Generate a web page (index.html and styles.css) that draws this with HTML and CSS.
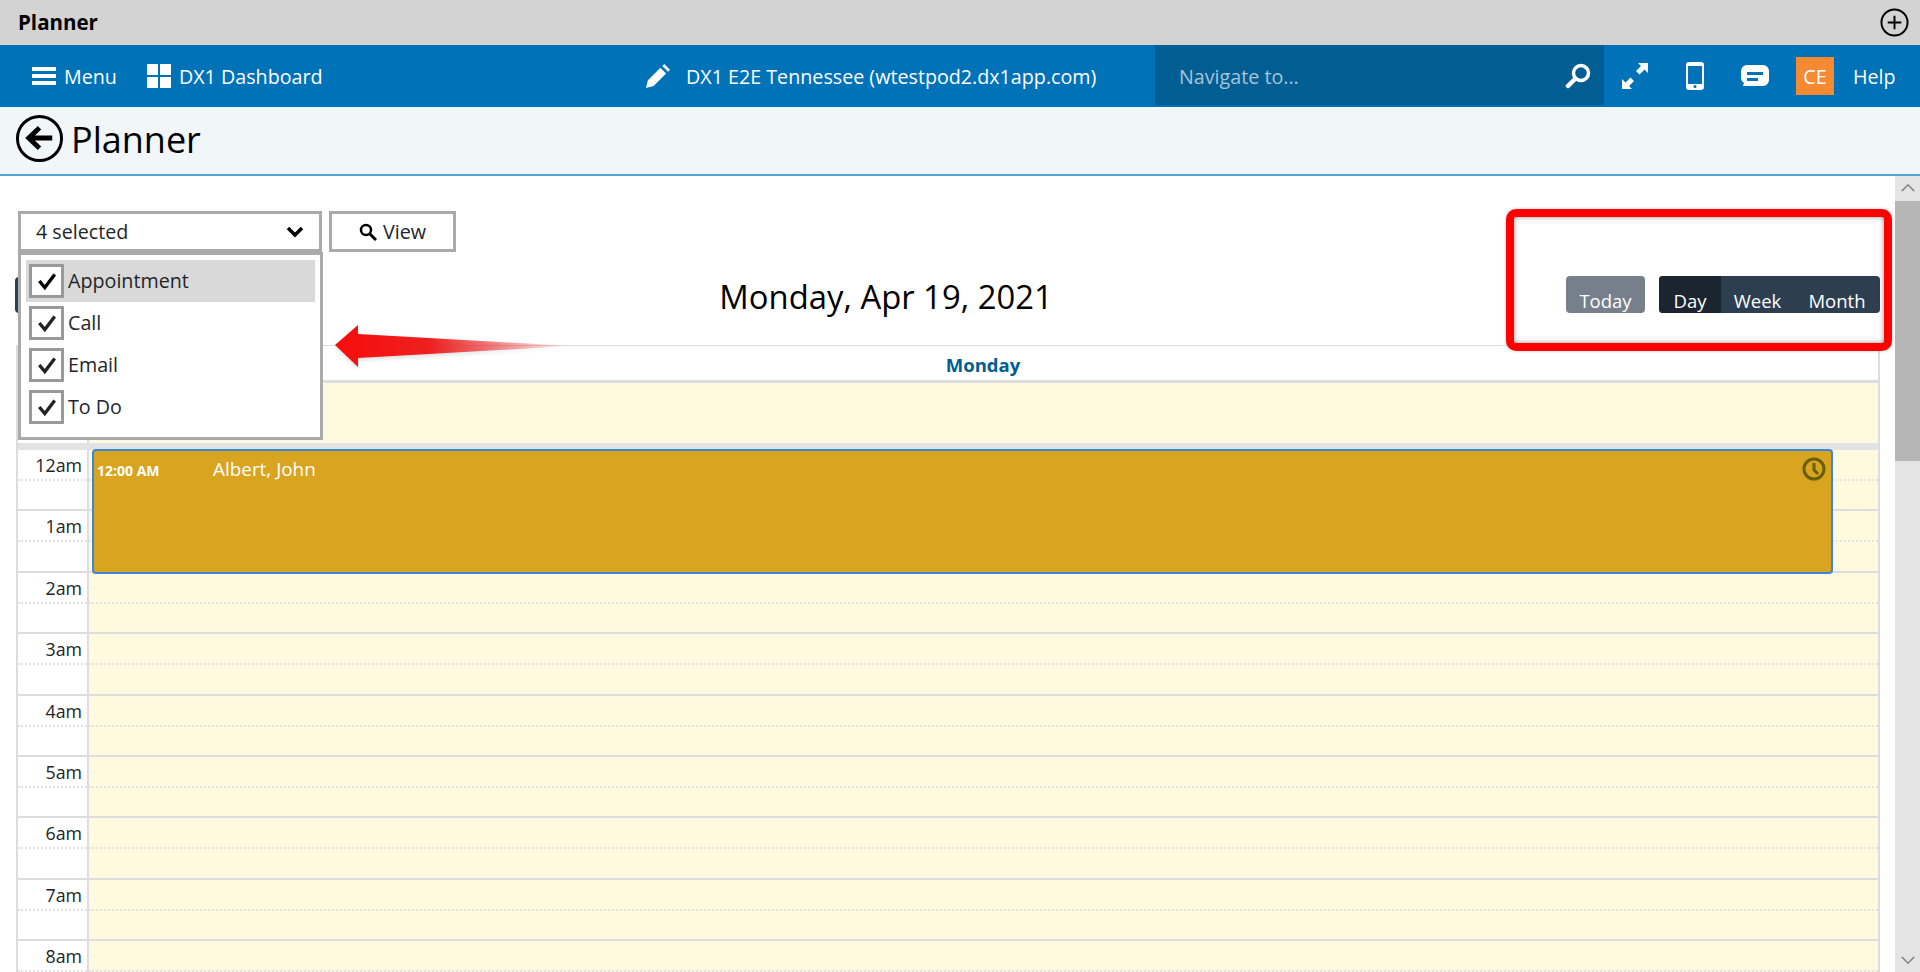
FILE: index.html
```html
<!DOCTYPE html>
<html lang="en">
<head>
<meta charset="utf-8">
<title>Planner</title>
<link rel="stylesheet" href="styles.css">
</head>
<body>
<header class="topbar">
  <span class="topbar-title">Planner</span>
  <svg class="icon-plus" viewBox="0 0 30 30"><circle cx="15" cy="15" r="13.5" fill="none" stroke="#000" stroke-width="2"/><path d="M15 8v14M8 15h14" stroke="#000" stroke-width="2"/></svg>
</header>
<nav class="navbar">
  <div class="nav-left">
    <a class="nav-item"><svg class="ic-menu" viewBox="0 0 24 20"><path d="M0 1h24v4H0zM0 8h24v4H0zM0 15h24v4H0z" fill="#fff"/></svg>Menu</a>
    <a class="nav-item"><svg class="ic-dash" viewBox="0 0 24 24"><path d="M0 0h11v11H0zM13 0h11v11H13zM0 13h11v11H0zM13 13h11v11H13z" fill="#fff"/></svg>DX1 Dashboard</a>
  </div>
  <div class="nav-site">
    <svg class="ic-pencil" viewBox="0 0 26 26"><path d="M1 25l2-8L16 4l6 6L9 23zM18 2l2-2 6 6-2 2z" fill="#fff"/></svg>
    <span>DX1 E2E Tennessee (wtestpod2.dx1app.com)</span>
  </div>
  <div class="nav-search">
    <span class="nav-placeholder">Navigate to...</span>
    <svg class="ic-search" viewBox="0 0 26 26"><circle cx="16" cy="10" r="7.5" fill="none" stroke="#fff" stroke-width="3.5"/><path d="M10 16l-7 7" stroke="#fff" stroke-width="4.5" stroke-linecap="round"/></svg>
  </div>
  <div class="nav-right">
    <svg class="ic-expand" viewBox="0 0 28 28"><path d="M17 1h10v10l-3.500-3.500-5 5-3.500-3.500 5-5zM11 27H1V17l3.500 3.500 5-5 3.500 3.500-5 5z" fill="#fff"/></svg>
    <svg class="ic-phone" viewBox="0 0 18 28"><path fill-rule="evenodd" d="M3 0h12a3 3 0 0 1 3 3v22a3 3 0 0 1-3 3H3a3 3 0 0 1-3-3V3a3 3 0 0 1 3-3zM2 4v18h14V4zM9 23a1.500 1.500 0 1 0 0 3 1.500 1.500 0 0 0 0-3z" fill="#fff"/></svg>
    <svg class="ic-chat" viewBox="0 0 28 24"><path fill-rule="evenodd" d="M6 1h16a6 6 0 0 1 6 6v9a6 6 0 0 1-6 6H2l1-3a6 6 0 0 1-3-5V7a6 6 0 0 1 6-6zM6 8v3h16V8zM6 14v3h11v-3z" fill="#fff"/></svg>
    <span class="avatar">CE</span>
    <span class="nav-help">Help</span>
  </div>
</nav>
<section class="titlebar">
  <svg class="ic-back" viewBox="0 0 50 50"><circle cx="25" cy="25" r="22.500" fill="none" stroke="#000" stroke-width="3"/><path d="M14 24.500h24M25 14L14 24.500 25 35" fill="none" stroke="#000" stroke-width="5"/></svg>
  <h1 class="page-title">Planner</h1>
</section>
<main class="main">
  <div class="content">
    <div class="toolbar">
      <div class="select">
        <span>4 selected</span>
        <svg class="ic-chevron" viewBox="0 0 18 12"><path d="M2 2l7 7 7-7" fill="none" stroke="#000" stroke-width="3.500"/></svg>
      </div>
      <button class="view-btn"><svg class="ic-view" viewBox="0 0 18 18"><circle cx="7" cy="7" r="5" fill="none" stroke="#000" stroke-width="2.500"/><path d="M11 11l6 6" stroke="#000" stroke-width="3"/></svg>View</button>
    </div>
    <div class="select-menu">
      <label class="option option-active"><span class="check"><svg viewBox="0 0 20 20"><path d="M3 10l5 6 9-12" fill="none" stroke="#000" stroke-width="3"/></svg></span>Appointment</label>
      <label class="option"><span class="check"><svg viewBox="0 0 20 20"><path d="M3 10l5 6 9-12" fill="none" stroke="#222" stroke-width="3"/></svg></span>Call</label>
      <label class="option"><span class="check"><svg viewBox="0 0 20 20"><path d="M3 10l5 6 9-12" fill="none" stroke="#222" stroke-width="3"/></svg></span>Email</label>
      <label class="option"><span class="check"><svg viewBox="0 0 20 20"><path d="M3 10l5 6 9-12" fill="none" stroke="#222" stroke-width="3"/></svg></span>To Do</label>
    </div>
    <svg class="red-arrow" viewBox="0 0 240 44">
      <defs><linearGradient id="ag" x1="0" x2="1" y1="0" y2="0"><stop offset="0" stop-color="#f80c0c"/><stop offset=".4" stop-color="#ee2020"/><stop offset="1" stop-color="#ee2020" stop-opacity="0"/></linearGradient></defs>
      <path d="M1 21L24 1v9l214 12-214 12v9z" fill="url(#ag)"/>
    </svg>
    <div class="cal-head">
      <div class="cal-prev"><span class="prev-btn"></span></div>
      <h2 class="cal-date">Monday, Apr 19, 2021</h2>
      <div class="cal-actions">
        <span class="today-btn">Today</span>
        <div class="view-group">
          <span class="vg-btn vg-day">Day</span>
          <span class="vg-btn vg-week">Week</span>
          <span class="vg-btn vg-month">Month</span>
        </div>
      </div>
    </div>
    <div class="red-box"></div>
    <div class="calendar">
      <div class="cal-dayhead">Monday</div>
      <div class="allday"><div class="hour-label"></div><div class="allday-cell"></div></div>
      <div class="hours">
        <div class="event"><span class="ev-time">12:00 AM</span><span class="ev-name">Albert, John</span>
          <svg class="ic-clock" viewBox="0 0 24 24"><circle cx="12" cy="12" r="10" fill="none" stroke="#675f00" stroke-width="3"/><path d="M12 6v7l4 4" fill="none" stroke="#675f00" stroke-width="3"/></svg>
        </div>
        <div class="hour"><div class="hour-label">12am</div><div class="hour-cell"></div></div>
        <div class="hour"><div class="hour-label">1am</div><div class="hour-cell"></div></div>
        <div class="hour"><div class="hour-label">2am</div><div class="hour-cell"></div></div>
        <div class="hour"><div class="hour-label">3am</div><div class="hour-cell"></div></div>
        <div class="hour"><div class="hour-label">4am</div><div class="hour-cell"></div></div>
        <div class="hour"><div class="hour-label">5am</div><div class="hour-cell"></div></div>
        <div class="hour"><div class="hour-label">6am</div><div class="hour-cell"></div></div>
        <div class="hour"><div class="hour-label">7am</div><div class="hour-cell"></div></div>
        <div class="hour"><div class="hour-label">8am</div><div class="hour-cell"></div></div>
      </div>
    </div>
  </div>
  <aside class="scrollbar">
    <svg class="sb-arrow" viewBox="0 0 16 10"><path d="M1 9l7-7 7 7" fill="none" stroke="#777" stroke-width="1.500"/></svg>
    <div class="sb-thumb"></div>
    <svg class="sb-arrow sb-down" viewBox="0 0 16 10"><path d="M1 1l7 7 7-7" fill="none" stroke="#777" stroke-width="1.500"/></svg>
  </aside>
</main>
</body>
</html>
```
FILE: styles.css
```css
* { box-sizing: border-box; }
html, body { margin: 0; height: 972px; overflow: hidden; }
body { font-family: "Open Sans", "Noto Sans", sans-serif; color: #212529; background: #fff; font-size: 19.700px; }
svg { display: block; flex: none; }

.topbar { height: 45px; background: #d3d3d3; display: flex; align-items: center; justify-content: space-between; padding: 0 11px 0 18px; }
.topbar-title { font-weight: 700; font-size: 20.500px; color: #000; margin-bottom: 2px; }
.icon-plus { width: 29px; height: 29px; }

.navbar { height: 62px; background: #0072b8; color: #fff; display: flex; align-items: flex-start; position: relative; }
.nav-left { display: flex; width: 645px; padding: 2px 0 0 32px; gap: 30px; height: 60px; align-items: center; flex: none; }
.nav-item { display: flex; align-items: center; gap: 8px; }
.ic-menu { width: 24px; height: 20px; }
.ic-dash { width: 24px; height: 24px; }
.nav-site { display: flex; align-items: center; gap: 16px; width: 510px; height: 60px; padding-top: 2px; flex: none; }
.ic-pencil { width: 25px; height: 25px; }
.nav-search { width: 449px; height: 60px; background: #005e93; display: flex; align-items: center; justify-content: space-between; padding: 2px 13px 0 24px; flex: none; }
.nav-placeholder { color: #a9c4d6; }
.ic-search { width: 26px; height: 26px; }
.nav-right { display: flex; align-items: center; height: 60px; flex: 1; padding: 2px 0 0 17px; }
.ic-expand { width: 28px; height: 28px; margin-right: 37px; }
.ic-phone { width: 18px; height: 28px; margin-right: 37px; }
.ic-chat { width: 28px; height: 24px; margin-right: 27px; }
.avatar { width: 38px; height: 38px; background: #f58a33; display: flex; align-items: center; justify-content: center; margin-right: 19px; }

.titlebar { height: 69px; background: #f1f6f9; border-bottom: 2px solid #4fa5da; display: flex; align-items: center; padding: 0 0 5px 15px; gap: 7px; }
.ic-back { width: 49px; height: 49px; }
.page-title { margin: 2px 0 0; font-weight: 400; font-size: 36px; color: #000; }

.main { display: flex; height: 796px; overflow: hidden; }
.content { flex: 1; padding: 35px 15px 0 16px; position: relative; min-width: 0; }

.toolbar { display: flex; gap: 7px; height: 41px; margin-left: 2px; }
.select { width: 304px; height: 41px; border: 3px solid #aaa; display: flex; align-items: center; justify-content: space-between; padding: 0 15px; background: #fff; }
.ic-chevron { width: 18px; height: 12px; }
.view-btn { width: 127px; height: 41px; border: 3px solid #aaa; background: #fff; font: inherit; color: #212529; display: flex; align-items: center; justify-content: center; gap: 6px; padding: 0; }
.ic-view { width: 18px; height: 18px; }

.select-menu { position: absolute; left: 18px; top: 76px; width: 305px; height: 188px; border: 3px solid #aaa; background: #fff; padding: 5px 5px 0 5px; z-index: 3; }
.option { display: flex; align-items: center; height: 42px; gap: 4px; padding-left: 3px; padding-bottom: 1px; }
.option-active { background: #d9d9d9; }
.check { width: 35px; height: 34px; border: 3px solid #999; background: #fff; display: flex; align-items: center; justify-content: center; flex: none; }
.check svg { width: 22px; height: 22px; }

.red-arrow { position: absolute; left: 334px; top: 148px; width: 240px; height: 44px; z-index: 2; filter: drop-shadow(0 2px 2px rgba(0,0,0,.15)); }

.cal-head { display: flex; align-items: center; margin-top: 25px; height: 36px; }
.cal-prev { width: 190px; flex: none; }
.prev-btn { display: block; width: 30px; height: 36px; background: #2c3e50; border-radius: 4px; margin-left: -1px; }
.cal-date { flex: 1; margin: 4px 0 0; text-align: center; font-weight: 400; font-size: 32.800px; color: #000; line-height: 36px; }
.cal-actions { display: flex; gap: 14px; flex: none; align-self: flex-start; margin-top: -1px; }
.today-btn, .vg-btn { height: 37px; color: #fff; display: flex; align-items: flex-end; justify-content: center; font-size: 18.500px; line-height: 24px; }
.today-btn { width: 79px; background: #76808c; border-radius: 4px; }
.view-group { display: flex; background: #2c3e50; border-radius: 4px; overflow: hidden; width: 221px; height: 37px; }
.vg-day { width: 62px; background: #1a252f; }
.vg-week { width: 73px; }
.vg-month { width: 86px; }

.red-box { position: absolute; left: 1506px; top: 33px; width: 386px; height: 142px; border: 8px solid #f00; border-radius: 10px; box-shadow: inset 0 0 5px rgba(0,0,0,.45), 0 0 3px rgba(0,0,0,.25); z-index: 4; }

.calendar { margin-top: 32px; border-top: 1px solid #ddd; border-left: 2px solid #ddd; border-right: 2px solid #ddd; }
.cal-dayhead { height: 34px; padding-left: 70px; text-align: center; font-weight: 700; font-size: 18.500px; color: #005e93; line-height: 38px; }
.allday { display: flex; height: 70px; border-top: 3px solid #ddd; border-bottom: 7px solid #e3e3e3; }
.allday-cell { flex: 1; background: #fff9e0; border-left: 2px solid #ddd; }
.hours { position: relative; }
.hour { display: flex; height: 61.400px; border-bottom: 2px solid #ddd; }
.hour-label { width: 69px; flex: none; text-align: right; padding: 2px 5px 0 0; font-size: 17.800px; line-height: 26px; position: relative; }
.hour-label:not(:empty)::after, .hour-cell::after { content: ""; position: absolute; left: 0; right: 0; top: 29px; border-top: 2px dotted #e2e2e2; }
.hour-cell { flex: 1; background: #fff9e0; border-left: 2px solid #ddd; position: relative; }
.event { position: absolute; left: 74px; top: -1px; width: 1741px; height: 125px; background: #d9a420; border: 2px solid #3a87d8; border-radius: 4px; color: #fff; z-index: 1; }
.ev-time { position: absolute; left: 3px; top: 11px; font-weight: 700; font-size: 14px; line-height: 18px; }
.ev-name { position: absolute; left: 119px; top: 5px; font-size: 18.900px; line-height: 26px; }
.ic-clock { position: absolute; right: 5px; top: 6px; width: 24px; height: 24px; }

.scrollbar { width: 25px; background: #e4e4e4; display: flex; flex-direction: column; align-items: center; position: relative; }
.sb-arrow { width: 14px; height: 9px; margin-top: 7px; }
.sb-thumb { width: 25px; height: 260px; background: #b6b6b6; margin-top: 9px; }
.sb-down { position: absolute; bottom: 7px; margin: 0; }
```
